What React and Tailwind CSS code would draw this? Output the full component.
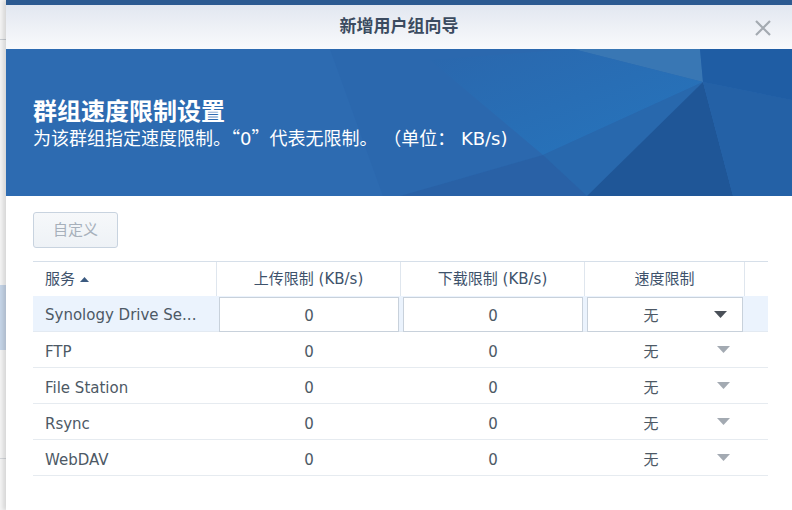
import React from "react";

const FONT = { fontFamily: '"DejaVu Sans", "Noto Sans CJK SC", sans-serif' };
const CJK = { fontFamily: '"Noto Sans CJK SC", sans-serif' };

const rows = [
  { name: "Synology Drive Se...", up: "0", down: "0", limit: "无", editing: true },
  { name: "FTP", up: "0", down: "0", limit: "无" },
  { name: "File Station", up: "0", down: "0", limit: "无" },
  { name: "Rsync", up: "0", down: "0", limit: "无" },
  { name: "WebDAV", up: "0", down: "0", limit: "无" },
];

// Faceted blue background of the banner (page coordinates via viewBox)
const BannerArt = () => (
  <svg
    className="absolute inset-0"
    width="786"
    height="147"
    viewBox="6 49 786 147"
    preserveAspectRatio="none"
  >
    <defs>
      <linearGradient id="mid" x1="0" y1="0" x2="1" y2="1">
        <stop offset="0" stopColor="#2a67ad" />
        <stop offset="1" stopColor="#2675bd" />
      </linearGradient>
    </defs>
    <rect x="6" y="49" width="786" height="147" fill="#2d6bb1" />
    <polygon points="330,49 573,49 703,82 543,155 400,196 383,196" fill="#2b68ae" />
    <polygon points="573,49 700,49 703,82" fill="#3977b4" />
    <polygon points="430,60 573,49 703,82 543,155" fill="url(#mid)" />
    <polygon points="543,155 703,82 587,196" fill="#2868ad" />
    <polygon points="400,196 543,155 587,196" fill="#2961a6" />
    <polygon points="703,82 587,196 733,196" fill="#1f5697" />
    <polygon points="703,82 733,196 792,196 792,100" fill="#2461a6" />
    <polygon points="700,49 792,49 792,100 703,82" fill="#1f5da4" />
  </svg>
);

const Caret = ({ dark }) => (
  <svg width="13" height="7" viewBox="0 0 13 7">
    <polygon points="0,0 13,0 6.5,7" fill={dark ? "#4a5058" : "#a3aab2"} />
  </svg>
);

const LimitCell = ({ value, editing }) => (
  <div
    className={`flex items-center h-full ${
      editing ? "mx-[2px] my-[1px] h-[34px] border border-[#c8d1db] bg-white" : ""
    }`}
  >
    <span className={`flex-1 text-center relative ${editing ? "top-[2px]" : "top-[3px]"}`}>
      {value}
    </span>
    <span className="w-[28px] flex items-center">
      <Caret dark={editing} />
    </span>
  </div>
);

const NumCell = ({ value, editing }) => (
  <div
    className={`flex items-center justify-center h-full ${
      editing ? "mx-[2px] my-[1px] h-[34px] border border-[#c8d1db] bg-white" : ""
    }`}
  >
    <span className={`relative ${editing ? "top-[2px]" : "top-[3px]"}`}>{value}</span>
  </div>
);

export default function App() {
  return (
    <div className="w-[792px] h-[510px] flex overflow-hidden bg-white" style={FONT}>
      {/* window behind the dialog */}
      <div className="w-[6px] h-full flex flex-col bg-[#f4f4f4]">
        <div className="h-[39px]" />
        <div className="h-[1px] bg-[#c9cdd2]" />
        <div className="h-[245px]" />
        <div className="h-[65px] bg-[#c6d5e8]" />
        <div className="h-[108px]" />
        <div className="h-[1px] bg-[#d4d7db]" />
      </div>

      {/* dialog */}
      <div className="flex-1 flex flex-col shadow-[-3px_0_4px_rgba(0,0,0,0.12)] bg-white">
        <div className="h-[5px] bg-[#2c5a91]" />
        <div className="h-[44px] relative flex items-center justify-center bg-gradient-to-b from-[#e2e7f0] to-[#f9fafc]">
          <span className="text-[17px] font-bold text-[#3b4b60]">新增用户组向导</span>
          <svg
            className="absolute right-[21px] top-[15px]"
            width="16"
            height="16"
            viewBox="0 0 16 16"
          >
            <path d="M1 1 L15 15 M15 1 L1 15" stroke="#a4aab1" strokeWidth="2.2" />
          </svg>
        </div>

        {/* banner */}
        <div className="relative h-[147px] overflow-hidden">
          <BannerArt />
          <div className="relative pl-[27px] pt-[49px] text-white">
            <div className="text-[24px] leading-[28px] font-bold">群组速度限制设置</div>
            <div className="text-[18px] leading-[22px]">
              {"为该群组指定速度限制。"}<span style={CJK}>“</span>0<span style={CJK}>”</span>{"代表无限制。 （单位： KB/s)"}
            </div>
          </div>
        </div>

        {/* content */}
        <div className="pl-[27px] pr-[24px] pt-[16px]">
          <button
            className="w-[85px] h-[36px] rounded-[3px] border border-[#c8d3df] bg-gradient-to-b from-[#f6f8fa] to-[#eef2f6] text-[15px] text-[#a7b0bb]"
            disabled
          >
            自定义
          </button>

          <div className="mt-[13px] text-[15px]">
            {/* header */}
            <div className="grid grid-cols-[184px_184px_184px_160px_1fr] h-[35px] border-t border-[#d6dfe9] text-[#3e526b]">
              <div className="flex items-center pl-[12px] gap-[5px] border-r border-[#dfe6ee]">
                服务
                <svg width="9" height="5" viewBox="0 0 9 5">
                  <polygon points="0,5 9,5 4.5,0" fill="#3b5a80" />
                </svg>
              </div>
              <div className="flex items-center justify-center border-r border-[#dfe6ee]">
                上传限制 (KB/s)
              </div>
              <div className="flex items-center justify-center border-r border-[#dfe6ee]">
                下载限制 (KB/s)
              </div>
              <div className="flex items-center justify-center border-r border-[#dfe6ee]">
                速度限制
              </div>
              <div />
            </div>

            {/* rows */}
            {rows.map((r) => (
              <div
                key={r.name}
                className={`grid grid-cols-[184px_184px_184px_160px_1fr] h-[36px] border-b text-[#4d5965] ${
                  r.editing ? "bg-[#ebf3fd] border-[#e3eaf2]" : "border-[#e6ebf0]"
                }`}
              >
                <div className="flex items-center pl-[12px] pr-[4px] overflow-hidden whitespace-nowrap">
                  <span className={`relative ${r.editing ? "top-[2px]" : "top-[3px]"}`}>
                    {r.name}
                  </span>
                </div>
                <NumCell value={r.up} editing={r.editing} />
                <NumCell value={r.down} editing={r.editing} />
                <LimitCell value={r.limit} editing={r.editing} />
                <div />
              </div>
            ))}
          </div>
        </div>
      </div>
    </div>
  );
}
